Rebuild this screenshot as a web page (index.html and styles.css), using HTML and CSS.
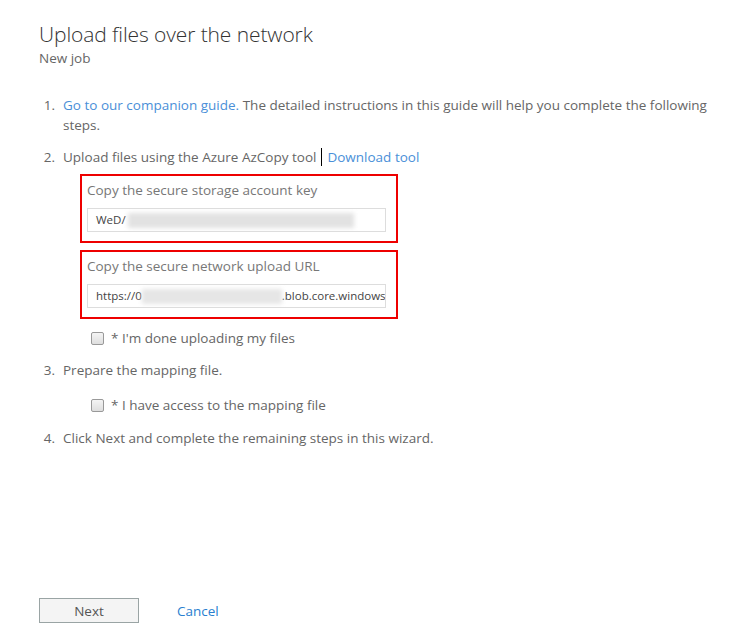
FILE: index.html
```html
<!DOCTYPE html>
<html>
<head>
<meta charset="utf-8">
<link rel="stylesheet" href="styles.css">
</head>
<body>
<div class="page">
  <header class="head">
    <h1 class="title">Upload files over the network</h1>
    <div class="subtitle">New job</div>
  </header>
  <ol class="steps">
    <li class="step"><span class="num">1.</span><div class="body"><a class="link">Go to our companion guide.</a><span> The detailed instructions in this guide will help you complete the following steps.</span></div></li>
    <li class="step"><span class="num">2.</span><div class="body">
      <div><span>Upload files using the Azure AzCopy tool</span><span class="sep"></span><a class="link">Download tool</a></div>
      <div class="box">
        <div class="box-label">Copy the secure storage account key</div>
        <div class="field"><span class="val">WeD/</span><span class="blur b1"></span></div>
      </div>
      <div class="box">
        <div class="box-label">Copy the secure network upload URL</div>
        <div class="field"><span class="val">https://0</span><span class="blur b2"></span><span class="val">.blob.core.windows</span></div>
      </div>
      <label class="check"><span class="cb"></span>* I'm done uploading my files</label>
    </div></li>
    <li class="step"><span class="num">3.</span><div class="body">
      <div>Prepare the mapping file.</div>
      <label class="check check2"><span class="cb"></span>* I have access to the mapping file</label>
    </div></li>
    <li class="step"><span class="num">4.</span><div class="body">Click Next and complete the remaining steps in this wizard.</div></li>
  </ol>
  <footer class="actions">
    <button class="btn">Next</button>
    <a class="link cancel">Cancel</a>
  </footer>
</div>
</body>
</html>
```
FILE: styles.css
```css
html, body { margin: 0; padding: 0; background: #fff; }
body { font-family: "Open Sans", "Noto Sans", sans-serif; color: #666; font-size: 13.5px; }
.page { width: 749px; height: 637px; box-sizing: border-box; padding: 20px 0 0 39px; position: relative; }
.title { margin: 0; font-weight: 300; font-size: 21px; line-height: 28px; color: #333; letter-spacing: -0.1px; }
.subtitle { font-size: 13.5px; line-height: 18px; color: #666; margin-top: 1px; }
.steps { list-style: none; margin: 28px 0 0 0; padding: 0; }
.step { display: flex; margin-bottom: 12px; line-height: 20px; }
.num { width: 16px; margin-right: 8px; text-align: right; flex: none; }
.body { flex: 1; padding-right: 30px; }
.link { color: #4a8fd8; cursor: pointer; }
.sep { display: inline-block; width: 1px; height: 18px; background: #000; vertical-align: -4px; margin: 0 5px 0 5px; }
.box { width: 318px; box-sizing: border-box; border: 2px solid #e00; margin-left: 17px; margin-top: 7px; padding: 4px 10px 9px 5px; }
.box-label { line-height: 20px; font-size: 13.5px; color: #777; }
.field { margin-top: 8px; height: 24px; border: 1px solid #ddd; box-sizing: border-box; display: flex; align-items: center; padding-left: 8px; font-size: 11.5px; color: #444; overflow: hidden; white-space: nowrap; }
.blur { display: inline-block; height: 15px; background: #e2e2e2; filter: blur(2px); flex: none; }
.b1 { width: 226px; margin-left: 2px; }
.b2 { width: 140px; background: #e6e6e6; }
.check { display: flex; align-items: center; margin: 9px 0 0 28px; }
.check2 { margin-top: 15px; margin-bottom: 1px; }
.cb { width: 11px; height: 11px; border: 1px solid #999; border-radius: 2px; background: linear-gradient(#f4f4f4, #dedede); margin-right: 7px; }
.actions { position: absolute; left: 39px; top: 598px; display: flex; align-items: center; }
.btn { width: 100px; height: 25px; border: 1px solid #9aa4a4; background: #f4f4f4; color: #555; font-family: inherit; font-size: 13.5px; padding: 0; }
.cancel { margin-left: 38px; font-size: 13.5px; color: #2a7fd0; }
```
